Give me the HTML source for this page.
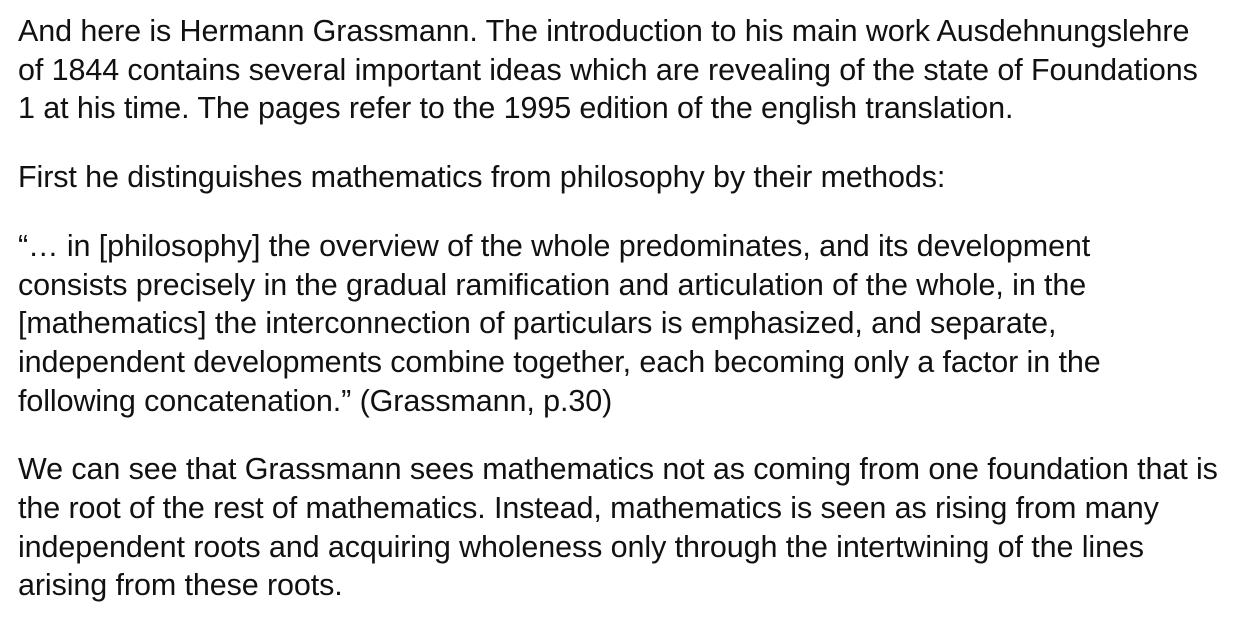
<!DOCTYPE html>
<html><head><meta charset="utf-8"><style>
html,body{margin:0;padding:0;background:#fff;width:1235px;height:617px;overflow:hidden}
body{font-family:"Liberation Sans",sans-serif;font-size:30.5px;line-height:38.7px;color:#111;letter-spacing:-0.1px}
.c{position:absolute;left:18px;top:12px;white-space:nowrap}
p{margin:0 0 30px 0}
</style></head><body><div class="c">
<p>And here is Hermann Grassmann. The introduction to his main work Ausdehnungslehre<br>of 1844 contains several important ideas which are revealing of the state of Foundations<br>1 at his time. The pages refer to the 1995 edition of the english translation.</p>
<p>First he distinguishes mathematics from philosophy by their methods:</p>
<p>“… in [philosophy] the overview of the whole predominates, and its development<br>consists precisely in the gradual ramification and articulation of the whole, in the<br>[mathematics] the interconnection of particulars is emphasized, and separate,<br>independent developments combine together, each becoming only a factor in the<br>following concatenation.” (Grassmann, p.30)</p>
<p>We can see that Grassmann sees mathematics not as coming from one foundation that is<br>the root of the rest of mathematics. Instead, mathematics is seen as rising from many<br>independent roots and acquiring wholeness only through the intertwining of the lines<br>arising from these roots.</p>
</div></body></html>
